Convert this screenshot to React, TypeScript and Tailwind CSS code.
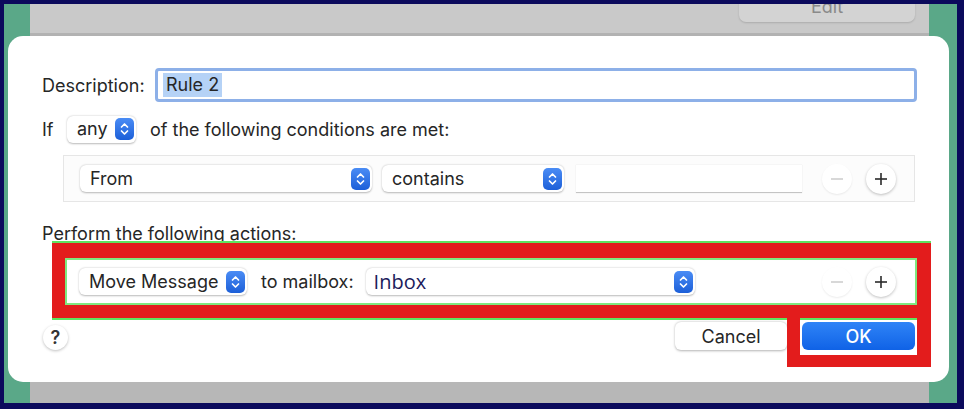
import type { ReactNode } from 'react'

const sans = "font-['Inter','Liberation_Sans',sans-serif]"

// Small blue up/down arrows shown at the right end of a popup button
function Stepper() {
  return (
    <span className="flex h-[22px] w-[19px] shrink-0 items-center justify-center rounded-[5px] bg-gradient-to-b from-[#4a8cf5] to-[#1c5fd8]">
      <svg width="11" height="16" viewBox="0 0 11 16" fill="none">
        <path d="M2.5 6 L5.5 3 L8.5 6" stroke="white" strokeWidth="1.7" strokeLinecap="round" strokeLinejoin="round" />
        <path d="M2.5 10 L5.5 13 L8.5 10" stroke="white" strokeWidth="1.7" strokeLinecap="round" strokeLinejoin="round" />
      </svg>
    </span>
  )
}

function Popup({ width, children }: { width: string; children: ReactNode }) {
  return (
    <div
      className={`flex h-[27px] ${width} shrink-0 items-center justify-between rounded-[6px] bg-white pl-[10px] pr-[2px] shadow-[0_0.5px_2px_rgba(0,0,0,0.28)]`}
    >
      <span className="text-[18px] leading-none text-[#262626]">{children}</span>
      <Stepper />
    </div>
  )
}

function RoundButton({ kind }: { kind: 'minus' | 'plus' }) {
  const active = kind === 'plus'
  return (
    <span
      className={`flex h-[30px] w-[30px] items-center justify-center rounded-full bg-white ${
        active ? 'shadow-[0_1px_3px_rgba(0,0,0,0.25)]' : 'shadow-[0_1px_2px_rgba(0,0,0,0.08)]'
      }`}
    >
      <svg width="14" height="14" viewBox="0 0 14 14">
        <path d="M1 7 H13" stroke={active ? '#2a2a2a' : '#cfcfcf'} strokeWidth="1.6" />
        {active && <path d="M7 1 V13" stroke="#2a2a2a" strokeWidth="1.6" />}
      </svg>
    </span>
  )
}

export default function App() {
  return (
    <div className={`relative h-[409px] w-[964px] overflow-hidden border-b-[6px] border-l-[4px] border-r-[7px] border-t-[4px] border-[#0b0a5c] ${sans}`}>
      {/* window behind the sheet */}
      <div className="flex h-full">
        <div className="w-[26px] bg-[#5aa888]" />
        <div className="flex flex-1 flex-col">
          <div className="relative h-[29px] overflow-hidden bg-[#c9c9c9]">
            <div className="absolute right-[14px] top-[-12px] flex h-[30px] w-[176px] items-center justify-center rounded-[7px] bg-[#d3d3d3] text-[18px] leading-none text-[#8a8a8a] shadow-[0_1px_2px_rgba(0,0,0,0.15)]">
              Edit
            </div>
          </div>
          <div className="h-[3px] bg-[#b2b2b2]" />
          <div className="flex-1 bg-[#b7b7b7]" />
        </div>
        <div className="w-[28px] bg-[#5aa888]" />
      </div>

      {/* rule editor sheet */}
      <div className="absolute left-[4px] top-[32px] flex h-[346px] w-[941px] flex-col rounded-[15px] bg-white text-[#262626]">
        <div className="mt-[32px] flex h-[34px] items-center pl-[34px]">
          <span className="w-[113px] text-[18px]">Description:</span>
          <div className="flex h-[34px] w-[762px] items-center rounded-[4px] border-[3px] border-[#8db0e8] pl-[5px]">
            <span className="bg-[#b5d2f6] px-[3px] text-[18px] leading-[24px]">Rule 2</span>
          </div>
        </div>

        <div className="mt-[14px] flex h-[26px] items-center pl-[34px] text-[18px]">
          <span className="w-[25px]">If</span>
          <Popup width="w-[69px]">any</Popup>
          <span className="ml-[14px]">of the following conditions are met:</span>
        </div>

        <div className="ml-[55px] mt-[13px] flex h-[47px] w-[852px] items-center border border-[#e6e6e6] bg-[#fcfcfc] pl-[16px] pr-[18px]">
          <Popup width="w-[292px]">From</Popup>
          <div className="ml-[10px]">
            <Popup width="w-[182px]">contains</Popup>
          </div>
          <div className="ml-[12px] h-[28px] w-[226px] border-b border-[#c4c4c4] bg-white shadow-[0_0_1px_rgba(0,0,0,0.15)]" />
          <div className="ml-auto flex gap-[14px]">
            <RoundButton kind="minus" />
            <RoundButton kind="plus" />
          </div>
        </div>

        <div className="mt-[22px] pl-[34px] text-[18px] leading-[20px]">Perform the following actions:</div>

        {/* highlighted action row */}
        <div className="ml-[44px] mt-[-1px] w-[879px] border-b-[13px] border-l-[13px] border-r-[14px] border-t-[15px] border-[#e31c1c] shadow-[0_-2px_0_#5fe35f,0_2px_0_#5fe35f]">
          <div className="flex h-[47px] items-center border-2 border-[#7fe87f] pl-[12px] pr-[19px]">
            <Popup width="w-[168px]">Move Message</Popup>
            <span className="ml-[14px] text-[18px]">to mailbox:</span>
            <div className="ml-[12px] flex h-[27px] w-[329px] items-center justify-between rounded-[6px] bg-white pl-[8px] pr-[2px] shadow-[0_0.5px_2px_rgba(0,0,0,0.28)]">
              <span className="font-['Open_Sans','Noto_Sans',sans-serif] text-[20px] leading-none text-[#1b1b5c]">Inbox</span>
              <Stepper />
            </div>
            <div className="ml-auto flex gap-[14px]">
              <RoundButton kind="minus" />
              <RoundButton kind="plus" />
            </div>
          </div>
        </div>

        <div className="flex pl-[35px] pr-[18px]">
          <span className="mt-[7px] flex h-[25px] w-[25px] items-center justify-center rounded-full bg-white text-[18px] font-semibold leading-none text-[#333] shadow-[0_1px_3px_rgba(0,0,0,0.25)]">
            ?
          </span>
          <div className="ml-auto flex">
            <button
              type="button"
              className="mt-[4px] h-[28px] w-[112px] rounded-[6px] bg-white text-[18px] text-[#262626] shadow-[0_0.5px_2.5px_rgba(0,0,0,0.3)]"
            >
              Cancel
            </button>
            <div className="border-b-[12px] border-l-[13px] border-r-[14px] border-[#e31c1c] pb-[5px] pl-[2px] pr-[2px] pt-[4px]">
              <button
                type="button"
                className="h-[28px] w-[113px] rounded-[6px] bg-gradient-to-b from-[#2f84f7] to-[#0f62e6] text-[18px] font-medium text-white"
              >
                OK
              </button>
            </div>
          </div>
        </div>
      </div>
    </div>
  )
}
